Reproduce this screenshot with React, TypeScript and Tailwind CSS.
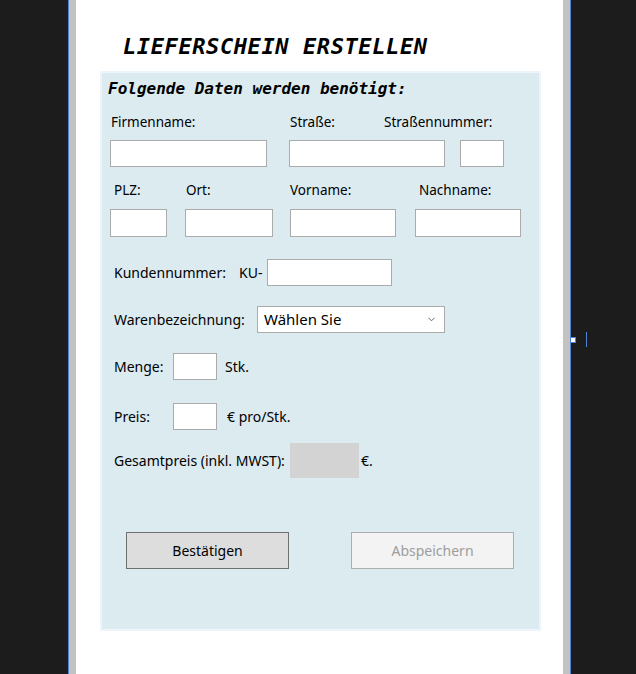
import React from 'react';

const Field = ({ w, h = 27 }: { w: string; h?: number }) => (
  <input
    readOnly
    className={`${w} ${h === 28 ? 'h-[28px]' : 'h-[27px]'} border border-[#ababab] bg-white outline-none`}
  />
);

const App = () => {
  return (
    <div className="relative flex h-[674px] w-[636px] overflow-hidden bg-[#1c1c1c] font-['Noto_Sans',sans-serif] text-[14px] text-black">
      {/* window frame left */}
      <div className="w-[68px] shrink-0" />
      <div className="w-px shrink-0 bg-[#4f82d4]" />
      <div className="w-[7px] shrink-0 bg-[#c2c2c2]" />

      {/* form page */}
      <div className="w-[487px] shrink-0 bg-white">
        <div className="pl-[47px] pt-[34px]">
          <h1 className="font-['DejaVu_Sans_Mono',monospace] text-[22px] font-bold italic leading-[26px] tracking-[0.6px]">
            LIEFERSCHEIN ERSTELLEN
          </h1>
        </div>

        <div className="ml-[24px] mt-[11px] h-[560px] w-[441px] border-2 border-[#eef5fa] bg-[#dcebf0]">
          <div className="mt-[6px] pl-[6px] font-['DejaVu_Sans_Mono',monospace] text-[16px] font-bold italic leading-[20px]">
            Folgende Daten werden benötigt:
          </div>

          {/* Firma / Straße */}
          <div className="mt-[13px] flex pl-[9px] text-[13.5px] leading-[20px]">
            <span className="w-[179px]">Firmenname:</span>
            <span className="w-[94px]">Straße:</span>
            <span>Straßennummer:</span>
          </div>
          <div className="mt-[8px] flex pl-[8px]">
            <Field w="w-[157px]" />
            <div className="ml-[22px]">
              <Field w="w-[156px]" />
            </div>
            <div className="ml-[15px]">
              <Field w="w-[44px]" />
            </div>
          </div>

          {/* PLZ / Ort / Namen */}
          <div className="mt-[13px] flex pl-[12px] text-[13.5px] leading-[20px]">
            <span className="w-[72px]">PLZ:</span>
            <span className="w-[104px]">Ort:</span>
            <span className="w-[129px]">Vorname:</span>
            <span>Nachname:</span>
          </div>
          <div className="mt-[9px] flex pl-[8px]">
            <Field w="w-[57px]" h={28} />
            <div className="ml-[18px]">
              <Field w="w-[88px]" h={28} />
            </div>
            <div className="ml-[17px]">
              <Field w="w-[106px]" h={28} />
            </div>
            <div className="ml-[19px]">
              <Field w="w-[106px]" h={28} />
            </div>
          </div>

          {/* Kundennummer */}
          <div className="mt-[22px] flex h-[27px] items-center pl-[12px]">
            <span className="w-[125px]">Kundennummer:</span>
            <span className="w-[28px]">KU-</span>
            <Field w="w-[125px]" />
          </div>

          {/* Warenbezeichnung */}
          <div className="mt-[20px] flex h-[27px] items-center pl-[12px]">
            <span className="w-[143px]">Warenbezeichnung:</span>
            <div className="flex h-[27px] w-[188px] items-center justify-between border border-[#ababab] bg-white pl-[6px] pr-[9px] text-[15px]">
              <span>Wählen Sie</span>
              <svg width="7" height="5" viewBox="0 0 7 5" fill="none">
                <path d="M0.5 0.8 L3.5 3.8 L6.5 0.8" stroke="#666" strokeWidth="1" />
              </svg>
            </div>
          </div>

          {/* Menge */}
          <div className="mt-[20px] flex h-[27px] items-center pl-[12px]">
            <span className="w-[59px]">Menge:</span>
            <Field w="w-[44px]" />
            <span className="ml-[8px]">Stk.</span>
          </div>

          {/* Preis */}
          <div className="mt-[23px] flex h-[27px] items-center pl-[12px]">
            <span className="w-[59px]">Preis:</span>
            <Field w="w-[44px]" />
            <span className="ml-[10px]">€ pro/Stk.</span>
          </div>

          {/* Gesamtpreis */}
          <div className="mt-[13px] flex h-[35px] items-center pl-[12px]">
            <span className="w-[176px]">Gesamtpreis (inkl. MWST):</span>
            <div className="h-[35px] w-[69px] bg-[#d3d3d3]" />
            <span className="ml-[2px]">€.</span>
          </div>

          {/* Buttons */}
          <div className="mt-[54px] flex pl-[24px]">
            <button className="h-[37px] w-[163px] border border-[#707070] bg-[#dddddd] text-[14px] text-black">
              Bestätigen
            </button>
            <button
              disabled
              className="ml-[62px] h-[37px] w-[163px] border border-[#adadad] bg-[#f3f3f3] text-[14px] text-[#9d9d9d]"
            >
              Abspeichern
            </button>
          </div>
        </div>
      </div>

      {/* window frame right */}
      <div className="w-[7px] shrink-0 bg-[#c2c2c2]" />
      <div className="w-px shrink-0 bg-[#4f82d4]" />
      <div className="flex-1" />

      {/* resize handle marks */}
      <div className="absolute left-[570px] top-[337px] h-[6px] w-[6px] border border-[#4f82d4] bg-white" />
      <div className="absolute left-[586px] top-[332px] h-[15px] w-px bg-[#4f82d4]" />
    </div>
  );
};

export default App;
